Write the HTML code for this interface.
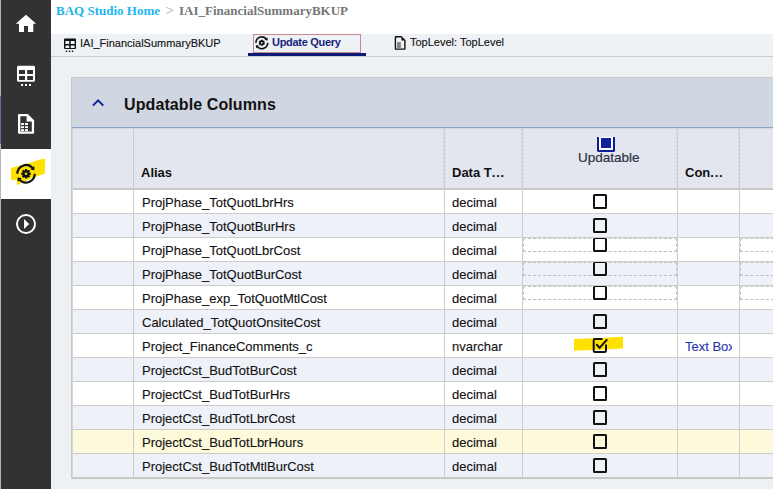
<!DOCTYPE html>
<html><head><meta charset="utf-8">
<style>
*{margin:0;padding:0;box-sizing:border-box}
html,body{width:773px;height:489px;overflow:hidden;background:#eef1f4;font-family:"Liberation Sans",sans-serif;position:relative}
.abs{position:absolute}
#strip{left:0;top:0;width:1px;height:489px;background:#b4b4b4}
#side{left:1px;top:0;width:50px;height:489px;background:#333134}
#active{left:1px;top:149px;width:50px;height:50px;background:#fff}
#crumb{left:51px;top:0;width:722px;height:34px;background:#fff}
.crumb{position:absolute;top:1px;font-family:"Liberation Serif",serif;font-weight:bold;font-size:13px;line-height:20px;white-space:nowrap}
#tabbar{left:51px;top:34px;width:722px;height:23px;background:#eef1f5;border-bottom:1px solid #c9cbcf}
.tab{position:absolute;font-size:11px;line-height:14px;white-space:nowrap;color:#111;-webkit-text-stroke:0.12px currentColor}
#panel{left:71px;top:77px;width:720px;height:402px;border:1px solid #c8c8c8;background:#eef1f4}
#phead{left:72px;top:78px;width:710px;height:50px;background:#d0d6e2;border-bottom:1px solid #8fa3cf}
#ptitle{left:124px;top:95px;font-size:16px;font-weight:bold;letter-spacing:0.1px;color:#111;line-height:19px;white-space:nowrap}
.cell{position:absolute;font-size:13px;line-height:16px;white-space:nowrap;color:#111;-webkit-text-stroke:0.12px currentColor}
.hd{font-weight:bold;-webkit-text-stroke:0}
.row{position:absolute;left:72px;width:710px;height:24px;border-bottom:1px solid #cccccc}
.vl{position:absolute;width:1px;background:#cdcdcd}
.vd{position:absolute;width:1px;background:repeating-linear-gradient(to bottom,#cfd3dc 0,#cfd3dc 2.5px,transparent 2.5px,transparent 4px)}
.cb{position:absolute;left:593px;width:14px;height:15px;border:2px solid #111;border-radius:1.5px}
.dash{position:absolute;height:14px;border:1px dashed #bdbdbd;border-top-color:#c4c4c4}
</style></head><body>
<div class="abs" id="strip"></div>
<div class="abs" style="left:0;top:96px;width:1px;height:48px;background:#6468a8"></div>
<div class="abs" id="side"></div>
<div class="abs" id="active"></div>

<!-- sidebar icons -->
<svg class="abs" style="left:0;top:0" width="51" height="489" viewBox="0 0 51 489">
  <!-- home -->
  <path fill="#fff" d="M26,14.7 L15.8,23.7 H19 V32 H24 V26 H28 V32 H33.3 V23.7 H36.2 Z"/>
  <!-- grid -->
  <path fill="#fff" fill-rule="evenodd" d="M18.5,65.8 H33.5 Q35,65.8 35,67.3 V80.3 Q35,81.8 33.5,81.8 H18.5 Q17,81.8 17,80.3 V67.3 Q17,65.8 18.5,65.8 Z M19,70 V73.9 H25 V70 Z M27.2,70 V73.9 H33 V70 Z M19,76.1 V79.9 H25 V76.1 Z M27.2,76.1 V79.9 H33 V76.1 Z"/>
  <rect x="21" y="84" width="2" height="2" fill="#fff"/>
  <rect x="25" y="84" width="2" height="2" fill="#fff"/>
  <rect x="29" y="84" width="2" height="2" fill="#fff"/>
  <!-- doc -->
  <path fill="#fff" fill-rule="evenodd" d="M19,114 H27.8 L34.1,120.3 V132.8 Q34.1,133.8 33.1,133.8 H19 Q18,133.8 18,132.8 V115 Q18,114 19,114 Z M20.3,116.3 V131.6 H31.8 V121.6 H26.6 V116.3 Z"/>
  <rect x="21" y="123" width="3" height="2" fill="#fff"/>
  <rect x="25" y="123" width="3" height="2" fill="#fff"/>
  <rect x="21" y="126.2" width="3" height="1.9" fill="#fff"/>
  <rect x="25" y="126.2" width="3" height="1.9" fill="#fff"/>
  <rect x="21" y="129.2" width="3" height="1.9" fill="#fff"/>
  <rect x="25" y="129.2" width="3" height="1.9" fill="#fff"/>
  <!-- yellow highlight -->
  <path fill="#ffe100" d="M11,168 L29,163 L40,159.5 L45,158.5 V173.5 L35,177 L22,182 L18,185 H17 V180 H11 Z"/>
  <!-- refresh gear -->
  <path d="M17.30,173.80 A8.7,8.7 0 0 1 32.47,167.98" fill="none" stroke="#111" stroke-width="2.2"/>
  <path d="M34.70,173.80 A8.7,8.7 0 0 1 19.53,179.62" fill="none" stroke="#111" stroke-width="2.2"/>
  <path d="M34.27,165.95 L34.47,170.21 L30.26,169.56 Z" fill="#111"/>
  <path d="M17.73,181.65 L17.53,177.39 L21.74,178.04 Z" fill="#111"/>
  <path fill="#111" fill-rule="evenodd" d="M24.88,170.17 L25.04,168.99 L26.96,168.99 L27.12,170.17 L27.78,170.44 L28.72,169.73 L30.07,171.08 L29.36,172.02 L29.63,172.68 L30.81,172.84 L30.81,174.76 L29.63,174.92 L29.36,175.58 L30.07,176.52 L28.72,177.87 L27.78,177.16 L27.12,177.43 L26.96,178.61 L25.04,178.61 L24.88,177.43 L24.22,177.16 L23.28,177.87 L21.93,176.52 L22.64,175.58 L22.37,174.92 L21.19,174.76 L21.19,172.84 L22.37,172.68 L22.64,172.02 L21.93,171.08 L23.28,169.73 L24.22,170.44 Z M27.30,173.80 A1.3,1.3 0 1 0 24.70,173.80 A1.3,1.3 0 1 0 27.30,173.80 Z"/>
  <!-- play -->
  <circle cx="26" cy="224" r="9" fill="none" stroke="#fff" stroke-width="2"/>
  <path fill="#fff" d="M24,219 L29.2,224 L24,229 Z"/>
</svg>

<!-- breadcrumb -->
<div class="abs" id="crumb"></div>
<div class="crumb" style="left:56px;color:#1cb6ec">BAQ Studio Home</div>
<svg class="abs" style="left:164px;top:5px" width="12" height="11" viewBox="164 5 12 11"><path d="M166.2,7.2 L173.2,10.3 L166.2,13.5" fill="none" stroke="#b0b0b0" stroke-width="0.85"/></svg>
<div class="crumb" style="left:179px;color:#777">IAI_FinancialSummaryBKUP</div>

<!-- tab bar -->
<div class="abs" id="tabbar"></div>
<div class="tab" style="left:80px;top:36px">IAI_FinancialSummaryBKUP</div>
<div class="abs" style="left:253px;top:34px;width:108px;height:19px;border:1px solid #c48a90;background:#eef1f5"></div>
<div class="abs" style="left:248px;top:53px;width:118px;height:3px;background:#0c1a78"></div>
<div class="tab" style="left:272px;top:35px;font-weight:bold;color:#17247f;letter-spacing:-0.3px;-webkit-text-stroke:0">Update Query</div>
<div class="tab" style="left:410px;top:35px">TopLevel: TopLevel</div>

<svg class="abs" style="left:60px;top:34px" width="360" height="22" viewBox="60 34 360 22">
  <path fill="#111" fill-rule="evenodd" d="M65,38.5 H75 Q76,38.5 76,39.5 V48.1 Q76,49.1 75,49.1 H65 Q64,49.1 64,48.1 V39.5 Q64,38.5 65,38.5 Z M65.4,41 V43.9 H69.2 V41 Z M70.7,41 V43.9 H74.6 V41 Z M65.4,45.4 V47.9 H69.2 V45.4 Z M70.7,45.4 V47.9 H74.6 V45.4 Z"/>
  <rect x="65.8" y="50.6" width="1.4" height="1.4" fill="#111"/>
  <rect x="68.8" y="50.6" width="1.4" height="1.4" fill="#111"/>
  <rect x="71.8" y="50.6" width="1.4" height="1.4" fill="#111"/>
  <!-- tabrefresh -->
  <path d="M255.90,42.80 A5.9,5.9 0 0 1 266.18,38.85" fill="none" stroke="#111" stroke-width="1.6"/>
  <path d="M267.70,42.80 A5.9,5.9 0 0 1 257.42,46.75" fill="none" stroke="#111" stroke-width="1.6"/>
  <path d="M267.47,37.29 L267.72,40.56 L264.50,39.97 Z" fill="#111"/>
  <path d="M256.13,48.31 L255.88,45.04 L259.10,45.63 Z" fill="#111"/>
  <path fill="#111" fill-rule="evenodd" d="M260.71,40.55 L260.81,39.76 L262.79,39.76 L262.89,40.55 L263.21,40.73 L263.94,40.42 L264.93,42.13 L264.29,42.62 L264.29,42.98 L264.93,43.47 L263.94,45.18 L263.21,44.87 L262.89,45.05 L262.79,45.84 L260.81,45.84 L260.71,45.05 L260.39,44.87 L259.66,45.18 L258.67,43.47 L259.31,42.98 L259.31,42.62 L258.67,42.13 L259.66,40.42 L260.39,40.73 Z M262.70,42.80 A0.9,0.9 0 1 0 260.90,42.80 A0.9,0.9 0 1 0 262.70,42.80 Z"/>
  <!-- /tabrefresh -->
  <path fill="#111" fill-rule="evenodd" d="M395.7,36.1 H401.5 L405.6,40.2 V48.8 Q405.6,49.8 404.6,49.8 H395.7 Q394.7,49.8 394.7,48.8 V37.1 Q394.7,36.1 395.7,36.1 Z M396.1,37.5 V48.4 H404.2 V40.5 H401.4 V37.5 Z"/>
  <rect x="397.2" y="42.2" width="3.5" height="5.9" fill="#6a6a6a"/><rect x="398.6" y="42.2" width="0.8" height="5.9" fill="#aaa"/>
</svg>
<!-- panel -->
<div class="abs" id="panel"></div>
<div class="abs" id="phead"></div>
<svg class="abs" style="left:90px;top:96px" width="16" height="12"><path d="M2.9,9.6 L8.1,4.4 L13.3,9.6" fill="none" stroke="#0b1fa0" stroke-width="2"/></svg>
<div class="abs" id="ptitle">Updatable Columns</div>

<div id="table">
<div class="abs" style="left:72px;top:128px;width:701px;height:62px;background:#e3e6ee;border-top:1px solid #d4d8de;border-bottom:2px solid #c9c9c9"></div>
<div class="row" style="top:190px;background:#ffffff"></div>
<div class="row" style="top:214px;background:#eef1f8"></div>
<div class="row" style="top:238px;background:#ffffff"></div>
<div class="row" style="top:262px;background:#eef1f8"></div>
<div class="row" style="top:286px;background:#ffffff"></div>
<div class="row" style="top:310px;background:#eef1f8"></div>
<div class="row" style="top:334px;background:#ffffff"></div>
<div class="row" style="top:358px;background:#eef1f8"></div>
<div class="row" style="top:382px;background:#ffffff"></div>
<div class="row" style="top:406px;background:#eef1f8"></div>
<div class="row" style="top:430px;background:#fdfadc"></div>
<div class="row" style="top:454px;background:#eef1f8"></div>
<div class="vl" style="left:72px;top:128px;height:350px;background:#d6d6d6"></div>
<div class="vl" style="left:133px;top:129px;height:349px;background:#c9cbce"></div>
<div class="vd" style="left:443px;top:129px;height:59px"></div>
<div class="vl" style="left:444px;top:129px;height:349px"></div>
<div class="vd" style="left:521px;top:129px;height:59px"></div>
<div class="vl" style="left:522px;top:129px;height:349px"></div>
<div class="vd" style="left:676px;top:129px;height:59px"></div>
<div class="vl" style="left:677px;top:129px;height:349px"></div>
<div class="vd" style="left:738px;top:129px;height:59px"></div>
<div class="vl" style="left:739px;top:129px;height:349px"></div>
<div class="abs" style="left:71px;top:477px;width:702px;height:2px;background:#c8c8c8"></div>
<div class="cell hd" style="left:141px;top:165px">Alias</div>
<div class="cell hd" style="left:452px;top:165px">Data T<span style="letter-spacing:0.8px">..</span>.</div>
<div class="cell hd" style="left:685px;top:165px">Con<span style="letter-spacing:0.8px">..</span>.</div>
<div class="cell" style="left:578px;top:150px;font-size:13.5px;color:#2c3245;-webkit-text-stroke:0.2px #2c3245">Updatable</div>
<div class="abs" style="left:597px;top:137px;width:18px;height:15px;border:2px solid #0d1f98;border-top:0;background:#fff;border-radius:0 0 2px 2px"></div>
<div class="abs" style="left:601px;top:138px;width:10px;height:10px;background:#10239c"></div>
<div class="cell" style="left:142px;top:195px">ProjPhase_TotQuotLbrHrs</div>
<div class="cell" style="left:452px;top:195px">decimal</div>
<div class="cb" style="top:194px"></div>
<div class="cell" style="left:142px;top:219px">ProjPhase_TotQuotBurHrs</div>
<div class="cell" style="left:452px;top:219px">decimal</div>
<div class="cb" style="top:218px"></div>
<div class="cell" style="left:142px;top:243px">ProjPhase_TotQuotLbrCost</div>
<div class="cell" style="left:452px;top:243px">decimal</div>
<div class="dash" style="left:523px;top:238px;width:154px"></div>
<div class="dash" style="left:740px;top:238px;width:60px"></div>
<div class="cb" style="top:238px;border-top-width:1px;height:14px"></div>
<div class="cell" style="left:142px;top:267px">ProjPhase_TotQuotBurCost</div>
<div class="cell" style="left:452px;top:267px">decimal</div>
<div class="dash" style="left:523px;top:262px;width:154px"></div>
<div class="dash" style="left:740px;top:262px;width:60px"></div>
<div class="cb" style="top:262px;border-top-width:1px;height:14px"></div>
<div class="cell" style="left:142px;top:291px">ProjPhase_exp_TotQuotMtlCost</div>
<div class="cell" style="left:452px;top:291px">decimal</div>
<div class="dash" style="left:523px;top:286px;width:154px"></div>
<div class="dash" style="left:740px;top:286px;width:60px"></div>
<div class="cb" style="top:286px;border-top-width:1px;height:14px"></div>
<div class="cell" style="left:142px;top:315px">Calculated_TotQuotOnsiteCost</div>
<div class="cell" style="left:452px;top:315px">decimal</div>
<div class="cb" style="top:314px"></div>
<div class="cell" style="left:142px;top:339px">Project_FinanceComments_c</div>
<div class="cell" style="left:452px;top:339px">nvarchar</div>
<svg class="abs" style="left:570px;top:334px" width="56" height="22"><path fill="#ffe100" d="M4,5 L30,4 L53,2.8 V14.6 L30,15.8 L4,16.8 Z"/></svg>
<svg class="abs" style="left:585px;top:334px" width="30" height="22" viewBox="585 334 30 22"><path d="M602.5,339 H595 Q593.7,339 593.7,340.3 V350.7 Q593.7,352 595,352 H604.7 Q606,352 606,350.7 V344.5" fill="none" stroke="#111" stroke-width="2"/><path d="M596.3,344.3 L599.6,347.8 L607.2,339.3" fill="none" stroke="#111" stroke-width="2"/></svg>
<div class="cell" style="left:685px;top:339px;font-size:13px;color:#2a3aa8;width:47px;overflow:hidden">Text Box</div>
<div class="cell" style="left:142px;top:363px">ProjectCst_BudTotBurCost</div>
<div class="cell" style="left:452px;top:363px">decimal</div>
<div class="cb" style="top:362px"></div>
<div class="cell" style="left:142px;top:387px">ProjectCst_BudTotBurHrs</div>
<div class="cell" style="left:452px;top:387px">decimal</div>
<div class="cb" style="top:386px"></div>
<div class="cell" style="left:142px;top:411px">ProjectCst_BudTotLbrCost</div>
<div class="cell" style="left:452px;top:411px">decimal</div>
<div class="cb" style="top:410px"></div>
<div class="cell" style="left:142px;top:435px">ProjectCst_BudTotLbrHours</div>
<div class="cell" style="left:452px;top:435px">decimal</div>
<div class="cb" style="top:434px"></div>
<div class="cell" style="left:142px;top:459px">ProjectCst_BudTotMtlBurCost</div>
<div class="cell" style="left:452px;top:459px">decimal</div>
<div class="cb" style="top:458px"></div>
</div>
</body></html>
